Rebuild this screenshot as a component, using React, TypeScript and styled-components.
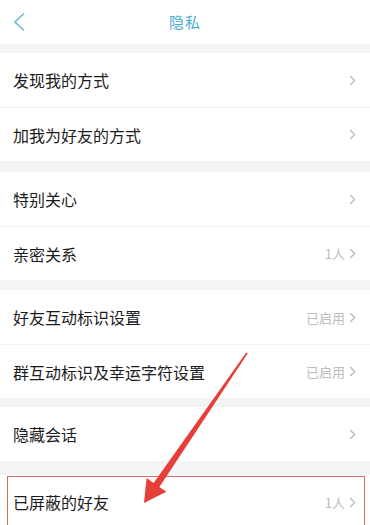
import React from 'react';
import styled, {createGlobalStyle, css} from "styled-components";

const GlobalStyle = createGlobalStyle`
  html, body {
    margin: 0;
    padding: 0;
    background: #f4f4f6;
    overflow: hidden;
  }
  body {
    font-family: "Noto Sans CJK SC", "Noto Sans", sans-serif;
  }
`

const Page = styled.div`
  position: relative;
  width: 370px;
  height: 525px;
  background: #f4f4f6;
  overflow: hidden;
`

const Header = styled.div`
  position: relative;
  height: 44px;
  background: #fff;
  display: flex;
  align-items: center;
  justify-content: center;
`

const BackButton = styled.div`
  position: absolute;
  left: 12px;
  top: 11px;
  width: 16px;
  height: 22px;
  display: flex;
  align-items: center;
`

const Title = styled.span`
  font-size: 15px;
  color: #47acd0;
  letter-spacing: 1px;
  margin-top: -2px;
`

const Group = styled.div<{ gap: number }>`
  margin-top: ${({gap}) => gap}px;
  background: #fff;
  display: flex;
  flex-direction: column;
`

const Row = styled.div<{ highlighted?: boolean }>`
  position: relative;
  height: 54px;
  display: flex;
  align-items: center;
  justify-content: space-between;
  padding: 0 14px 0 13px;
  box-sizing: border-box;

  & + & {
    border-top: 1px solid #f1f1f3;
  }

  ${({highlighted}) => highlighted && css`
    &::after {
      content: '';
      position: absolute;
      left: 7px;
      right: 5px;
      top: 1px;
      bottom: -10px;
      border: 1.5px solid #cf6a64;
    }
  `}
`

const Label = styled.span`
  font-size: 16px;
  color: #1c1c1c;
`

const Right = styled.div`
  display: flex;
  align-items: center;
  gap: 4px;
`

const Value = styled.span`
  font-size: 13px;
  color: #bdbdbd;
`

const Arrow = styled.svg`
  position: absolute;
  left: 0;
  top: 0;
  pointer-events: none;
`

const Chevron = () => (
	<svg width="7" height="11" viewBox="0 0 7 11">
		<polyline points="1.2,1 5.6,5.5 1.2,10" fill="none" stroke="#bcbcbc" strokeWidth="1.4"/>
	</svg>
)

type Item = { label: string, value?: string, highlighted?: boolean }

const groups: { gap: number, items: Item[] }[] = [
	{gap: 9, items: [{label: '发现我的方式'}, {label: '加我为好友的方式'}]},
	{gap: 11, items: [{label: '特别关心'}, {label: '亲密关系', value: '1人'}]},
	{gap: 10, items: [{label: '好友互动标识设置', value: '已启用'}, {label: '群互动标识及幸运字符设置', value: '已启用'}]},
	{gap: 9, items: [{label: '隐藏会话'}]},
	{gap: 14, items: [{label: '已屏蔽的好友', value: '1人', highlighted: true}]},
]

const App = () => {
	return (
		<Page>
			<GlobalStyle/>
			<Header>
				<BackButton>
					<svg width="14" height="20" viewBox="0 0 14 20">
						<polyline points="12,1.5 3,10 12,18.5" fill="none" stroke="#6cbad4" strokeWidth="1.6"/>
					</svg>
				</BackButton>
				<Title>隐私</Title>
			</Header>
			{groups.map((group, i) => (
				<Group key={i} gap={group.gap}>
					{group.items.map(item => (
						<Row key={item.label} highlighted={item.highlighted}>
							<Label>{item.label}</Label>
							<Right>
								{item.value && <Value>{item.value}</Value>}
								<Chevron/>
							</Right>
						</Row>
					))}
				</Group>
			))}
			<Arrow width="370" height="525" viewBox="0 0 370 525">
				<polygon
					points="246.3,352.5 153.6,482.9 146.6,478.1 144,503 166.4,491.7 159.4,486.9 247.7,353.5"
					fill="#e63f3a"
				/>
			</Arrow>
		</Page>
	);
};

export default App;
